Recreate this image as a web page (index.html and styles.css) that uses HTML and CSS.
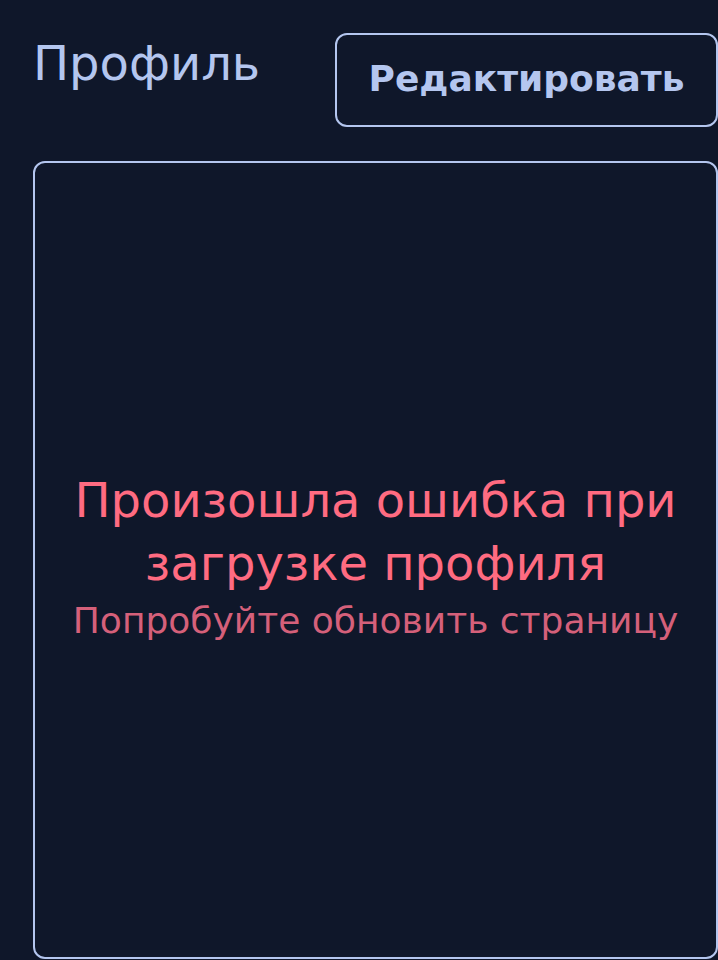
FILE: index.html
```html
<!DOCTYPE html>
<html lang="ru">
<head>
<meta charset="utf-8">
<title>Профиль</title>
<link rel="stylesheet" href="styles.css">
</head>
<body>
<main class="page">
  <header class="header">
    <h1 class="title">Профиль</h1>
    <button class="edit-btn" type="button">Редактировать</button>
  </header>
  <section class="card">
    <div class="error">
      <p class="error-title">Произошла ошибка при загрузке профиля</p>
      <p class="error-sub">Попробуйте обновить страницу</p>
    </div>
  </section>
</main>
</body>
</html>
```
FILE: styles.css
```css
html, body {
  margin: 0;
  padding: 0;
  background: #0f172a;
  height: 100%;
}
body {
  font-family: "DejaVu Sans", sans-serif;
  overflow: hidden;
}
.page {
  padding: 33px 0 0 33px;
  display: flex;
  flex-direction: column;
  gap: 34px;
}
.header {
  display: flex;
  justify-content: space-between;
  align-items: flex-start;
}
.title {
  margin: 0;
  padding-top: 2px;
  font-size: 48px;
  font-weight: normal;
  line-height: 56px;
  color: #b4c6ef;
}
.edit-btn {
  width: 383px;
  height: 94px;
  box-sizing: border-box;
  background: transparent;
  border: 2px solid #b4c6ef;
  border-radius: 12px;
  color: #b4c6ef;
  font-family: "DejaVu Sans", sans-serif;
  font-size: 36px;
  font-weight: bold;
  padding: 0 0 3px;
}
.card {
  height: 798px;
  box-sizing: border-box;
  border: 2px solid #b4c6ef;
  border-radius: 12px;
  display: flex;
  align-items: center;
  justify-content: center;
}
.error {
  text-align: center;
  padding: 0 10px 4px;
}
.error-title {
  margin: 0;
  font-size: 48px;
  line-height: 63px;
  color: #ff6b81;
}
.error-sub {
  margin: 0;
  font-size: 36px;
  line-height: 52px;
  color: #d5607a;
}
```
